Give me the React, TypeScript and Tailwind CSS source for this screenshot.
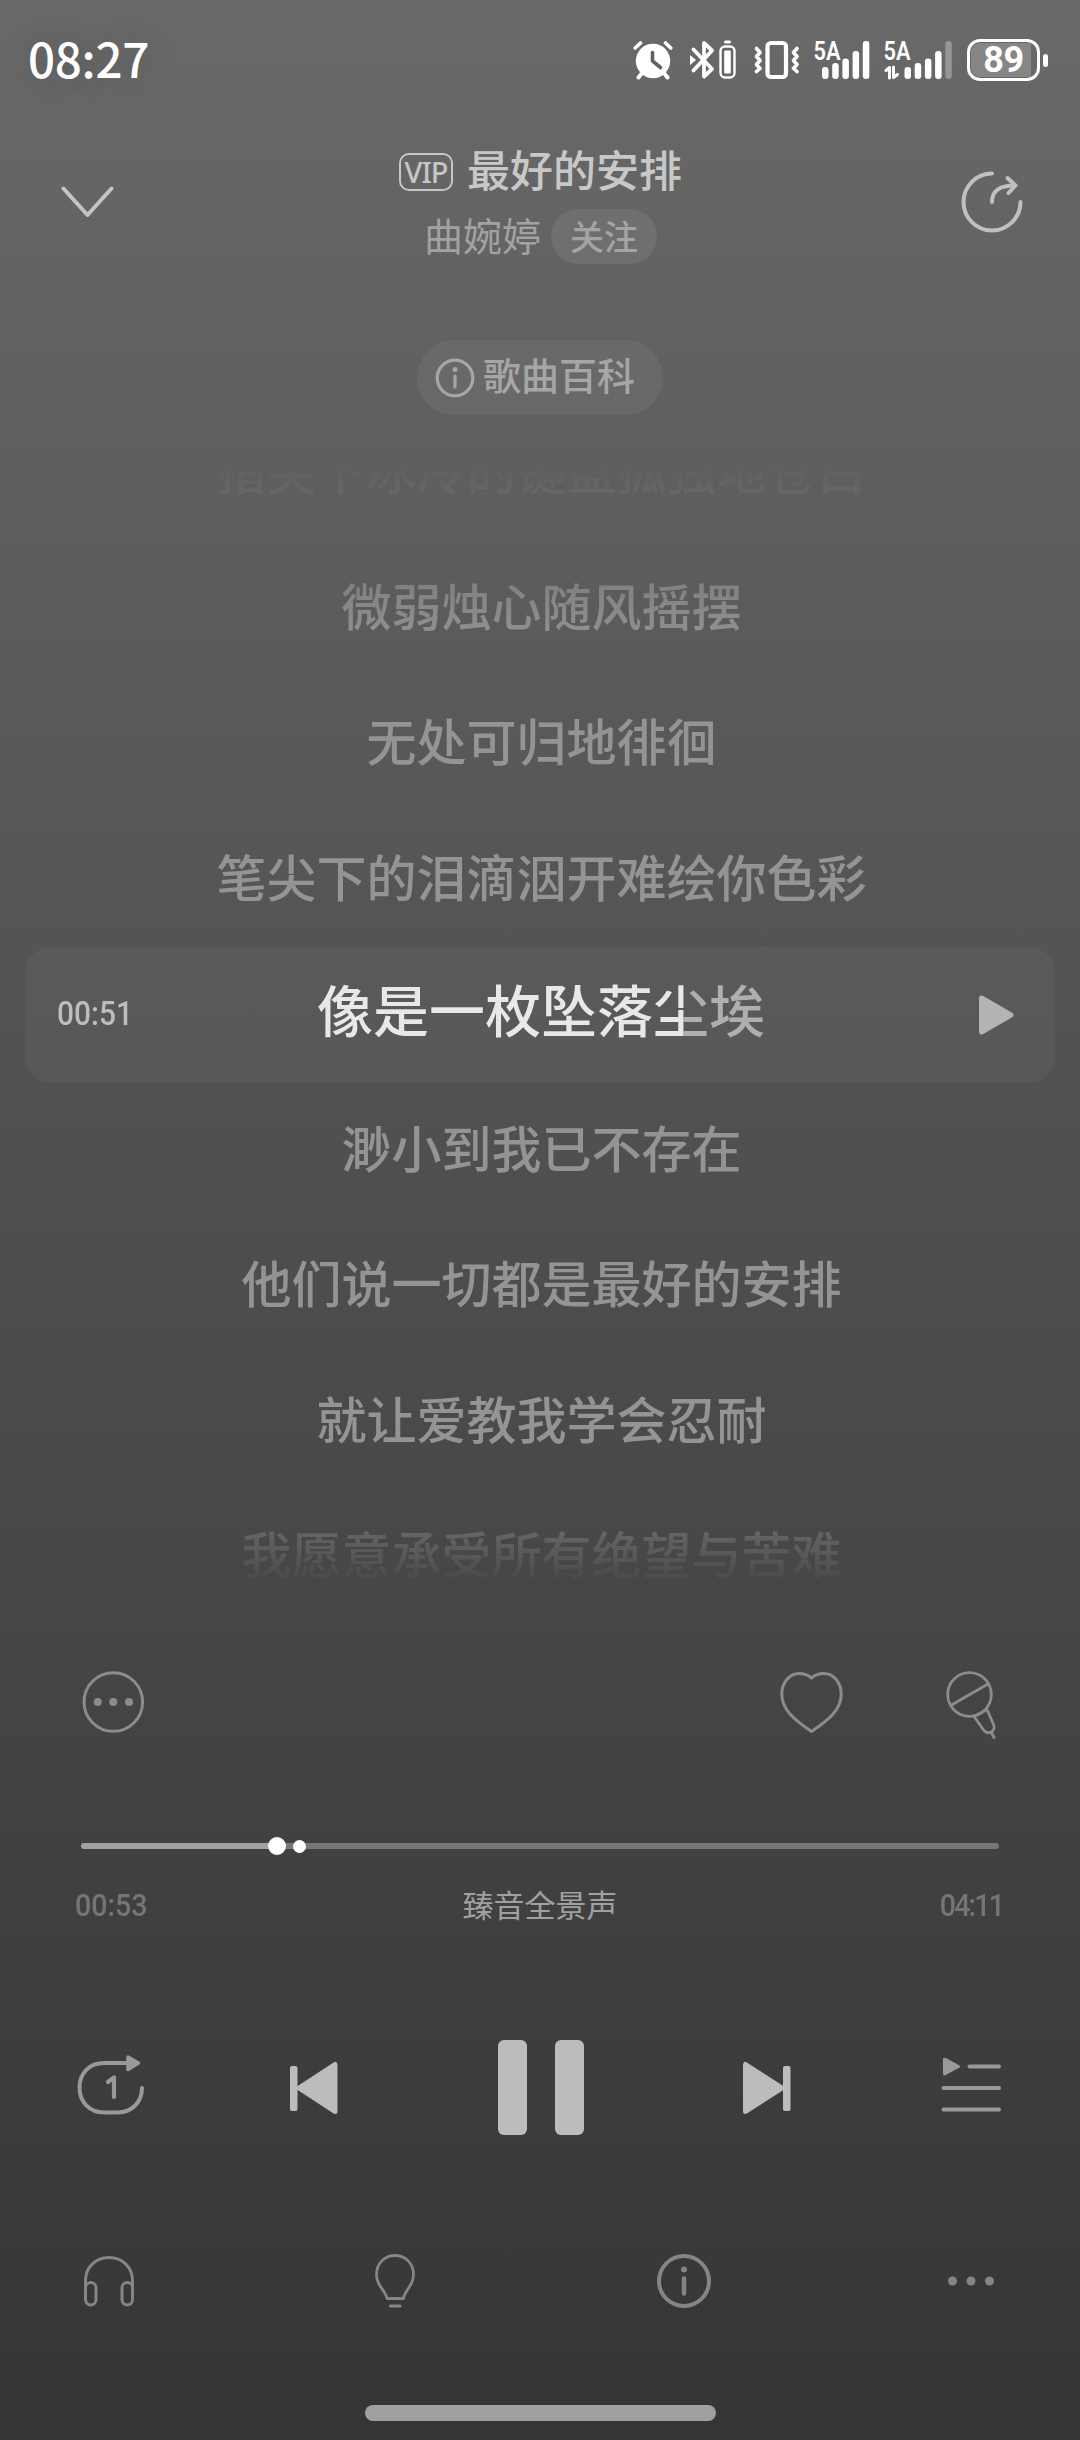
import React from 'react';

const lyrics = [
  '指尖下冰冷的键盘孤独地苍白',
  '微弱烛心随风摇摆',
  '无处可归地徘徊',
  '笔尖下的泪滴洇开难绘你色彩',
  '像是一枚坠落尘埃',
  '渺小到我已不存在',
  '他们说一切都是最好的安排',
  '就让爱教我学会忍耐',
  '我愿意承受所有绝望与苦难',
];

const CURRENT = 4;

const AlarmIcon = () => (
  <svg width="40" height="40" viewBox="0 0 40 40" fill="none" stroke="#fff" strokeLinecap="round">
    <circle cx="20" cy="21" r="17.2" fill="#fff" stroke="none" />
    <path d="M2.2 8 7.5 3M37.8 8 32.500 3" strokeWidth="3.600" />
    <path d="M9 33l-3.500 4.500M31 33l3.500 4.500" strokeWidth="4" />
    <path d="M19.500 12.500V21l8 6.500" stroke="#616161" strokeWidth="3.600" />
  </svg>
);

const BluetoothIcon = () => (
  <svg width="47" height="40" viewBox="0 0 47 40" fill="none" stroke="#fff">
    <path d="M3.500 9.500 22 29l-8 7.500V3L22 10.500 3.500 30.500" strokeWidth="3.800" strokeLinecap="round" strokeLinejoin="round" />
    <path d="M0 15l6 5-6 5z" fill="#fff" stroke="none" />
    <rect x="34" y="0.500" width="7" height="3" rx="1.500" fill="#fff" stroke="none" />
    <rect x="30.500" y="6.500" width="14" height="31" rx="4.500" strokeWidth="2.400" />
    <rect x="34.200" y="10.500" width="6.600" height="23" rx="1" fill="#fff" stroke="none" />
  </svg>
);

const VibrateIcon = () => (
  <svg width="46" height="40" viewBox="0 0 46 40" fill="none" stroke="#fff" strokeLinecap="round" strokeLinejoin="round">
    <rect x="13.500" y="3" width="18.500" height="34" rx="3.500" strokeWidth="4.200" />
    <path d="M2.500 8.500l3.500 4-3.500 4 3.500 4-3.500 4 3.500 4-3.500 3M43 8.500l-3.500 4 3.500 4-3.500 4 3.500 4-3.500 4 3.500 3" strokeWidth="3.600" />
  </svg>
);

const SignalIcon = ({ data = false }: { data?: boolean }) => (
  <svg className="overflow-visible" width={data ? 68 : 56} height="40" viewBox={data ? '0 0 68 40' : '0 0 56 40'} fill="#fff">
    <text x="-0.500" y="19.500" fontSize="26" fontWeight="600" fontFamily="Roboto, sans-serif" textLength="27" lengthAdjust="spacingAndGlyphs">
      5A
    </text>
    {data && (
      <path d="M2 30.500 5.500 27.500V38M9.500 27v10.500l4-3" fill="none" stroke="#fff" strokeWidth="3" strokeLinecap="round" strokeLinejoin="round" />
    )}
    <g transform={data ? 'translate(12.500 0)' : undefined}>
      <rect x="8" y="27" width="6.500" height="12" rx="3" />
      <rect x="18.200" y="23" width="6.500" height="16" rx="3" />
      <rect x="28.400" y="18.500" width="6.500" height="20.500" rx="3" />
      <rect x="38.600" y="11" width="6.500" height="28" rx="3" />
      <rect x="48.800" y="1" width="6.500" height="38" rx="3" fillOpacity={data ? 0.3 : 1} />
    </g>
  </svg>
);

const StatusBar = () => (
  <div className="flex h-[120px] items-center pl-7 pr-8 text-white">
    <span className="-mt-[5px] text-[47.500px] font-medium leading-[60px] tracking-[-0.300px] [text-shadow:0_0_40px_rgba(0,0,0,0.2)]">08:27</span>
    <div className="ml-auto flex items-center">
      <AlarmIcon />
      <div className="ml-[17px]"><BluetoothIcon /></div>
      <div className="ml-[17px]"><VibrateIcon /></div>
      <div className="ml-[14px]"><SignalIcon /></div>
      <div className="ml-[14px]"><SignalIcon data /></div>
      <div className="ml-[15px] flex items-center gap-[3px]">
        <div className="flex h-[42px] w-[73px] rounded-[13px] border-[3px] border-white p-px">
          <div className="flex h-full w-[60px] items-center justify-center rounded-l-[9px] bg-white/20 pl-[5px] font-['Roboto',sans-serif] text-[36px] font-bold leading-[36px] tracking-[-0.500px]">
            89
          </div>
        </div>
        <div className="h-[13px] w-[5px] rounded-full bg-white" />
      </div>
    </div>
  </div>
);

const Header = () => (
  <div className="flex h-[160px] justify-between pl-[61px] pr-[57px]">
    <svg className="mt-[66px]" width="54" height="32" viewBox="0 0 54 32" fill="none" stroke="#c4c4c4" strokeWidth="4" strokeLinecap="round" strokeLinejoin="round">
      <path d="M2.500 2.500 26.500 29 50.500 2.500" />
    </svg>
    <div className="flex flex-col items-center pl-[5px]">
      <div className="mt-5 flex h-[60px] items-center">
        <span className="mt-1 flex h-[38px] w-[54px] items-center justify-center rounded-[10px] border-2 border-[#c6c6c6] pb-px font-['Noto_Sans',sans-serif] text-[29px] font-medium leading-none tracking-[-1px] text-[#c6c6c6]">
          VIP
        </span>
        <h1 className="-mt-1 ml-[14px] text-[43px] font-medium leading-[56px] text-[#c8c8c8]">最好的安排</h1>
      </div>
      <div className="mt-[9px] flex items-center">
        <span className="-mt-[6px] text-[39px] leading-[54px] text-[#a2a2a2]">曲婉婷</span>
        <span className="ml-[10px] flex h-[55px] w-[106px] items-center justify-center rounded-full bg-white/[0.07] pb-[2px] text-[34px] font-medium leading-[46px] text-[#a4a4a4]">
          关注
        </span>
      </div>
    </div>
    <svg className="mt-[50px]" width="62" height="64" viewBox="0 0 62 64" fill="none" stroke="#c0c0c0" strokeWidth="4" strokeLinecap="round" strokeLinejoin="round">
      <path d="M31 3.500A28.500 28.500 0 1 0 59.500 32" />
      <path d="M31 32C31 21 38 15.500 54 15.500M46.500 8 54.500 15.500 47.500 23" />
    </svg>
  </div>
);

const Lyrics = () => (
  <div className="relative mt-10 h-[1135px] overflow-hidden">
    <div className="absolute left-[25px] top-[492px] h-[136px] w-[1030px] rounded-[26px] bg-white/[0.04]" />
    <div className="relative flow-root h-full [mask-image:linear-gradient(to_bottom,transparent_8px,black_190px,black_990px,transparent_1132px)]">
      <div className="-mt-[54px] flex flex-col pl-[3px] text-center text-[50px] font-medium text-[#949494]">
        {lyrics.map((line, i) => (
          <div key={line} className="flex h-[135.500px] shrink-0 items-center justify-center">
            {i === CURRENT ? (
              <span className="-mt-[6px] mr-px bg-[linear-gradient(to_right,#e8e8e8_81.6%,#afafaf_81.6%)] bg-clip-text text-[56px] leading-[80px] text-transparent">
                {line}
              </span>
            ) : (
              <span>{line}</span>
            )}
          </div>
        ))}
      </div>
    </div>
    <div className="absolute left-[57px] right-[65px] top-[540px] flex h-10 items-center justify-between">
      <span className="-mt-1 origin-left scale-x-[0.88] font-['Roboto',sans-serif] text-[34px] font-medium leading-[40px] text-[#bdbdbd]">00:51</span>
      <svg width="37" height="42" viewBox="0 0 37 42" fill="#b4b4b4" stroke="#b4b4b4" strokeWidth="5" strokeLinejoin="round">
        <path d="M3.500 4 33 21 3.500 38z" />
      </svg>
    </div>
  </div>
);

const ActionRow = () => (
  <div className="mt-[81px] flex h-[68px] items-start pl-[82px] pr-[83px] text-[#8c8c8c]">
    <svg width="63" height="63" viewBox="0 0 63 63" fill="none" stroke="currentColor" strokeWidth="3">
      <circle cx="31.300" cy="31" r="29.300" />
      <g fill="currentColor" stroke="none">
        <circle cx="15.700" cy="31" r="4" />
        <circle cx="31.300" cy="31" r="4" />
        <circle cx="47" cy="31" r="4" />
      </g>
    </svg>
    <svg className="ml-auto" width="64" height="64" viewBox="0 0 64 64" fill="none" stroke="currentColor" strokeWidth="3" strokeLinejoin="round">
      <path d="M31.500 7C27.500 3.500 23.500 2.500 19.500 2.500 9.500 2.500 1.800 11.500 1.800 23c0 15.500 12 25.500 29.700 37.500C49.500 48.500 61.200 38.500 61.200 23c0-11.500-7.700-20.500-17.700-20.500C39.500 2.500 35.500 3.500 31.500 7z" />
    </svg>
    <svg className="ml-[102px]" width="51" height="68" viewBox="0 0 51 68" fill="none" stroke="currentColor" strokeWidth="2.800" strokeLinecap="round" strokeLinejoin="round">
      <circle cx="23.500" cy="23.500" r="21.800" />
      <path d="M5.500 34 42 13" />
      <path d="M28 45.500 38 59.500c4 4.500 11 1.500 10-5L41 38.500 28 45.500" />
      <path d="M45.500 62l2.500 4.500" />
    </svg>
  </div>
);

const Progress = () => (
  <div className="mt-[98px] px-[77px]">
    <div className="relative mx-1 h-[18px]">
      <div className="absolute top-[6px] h-[6px] w-full rounded-full bg-[#777777]" />
      <div className="absolute top-[6px] h-[6px] w-[196px] rounded-l-full bg-[#a2a2a2]" />
      <div className="absolute left-[187px] size-[18px] rounded-full bg-white" />
      <div className="absolute left-[212px] top-[2.500px] size-[13px] rounded-full bg-white" />
    </div>
    <div className="mt-[29px] flex h-10 items-center justify-between text-[#757575]">
      <span className="-ml-[2px] mt-[2px] w-[92px] origin-left scale-x-[0.92] font-['Roboto',sans-serif] text-[31px] font-medium leading-none">00:53</span>
      <span className="text-[31px] leading-[40px] text-[#a0a0a0]">臻音全景声</span>
      <span className="mt-[2px] w-[90px] origin-right scale-x-[0.92] text-right font-['Roboto',sans-serif] text-[31px] font-medium leading-none tracking-[-2px]">04:11</span>
    </div>
  </div>
);

const Controls = () => (
  <div className="mt-[116px] flex h-[95px] items-center pl-[76px] text-[#bcbcbc]">
    <svg className="-mt-[6px]" width="70" height="68" viewBox="0 0 70 68" fill="none" stroke="#999" strokeWidth="4" strokeLinecap="round" strokeLinejoin="round">
      <path d="M50 12H28C13.500 12 3.500 22 3.500 36.500S13.500 61.500 28 61.500H41.500C56 61.500 66 51 66 37" />
      <path d="M52 6 62.500 12 52 18.500z" fill="#999" strokeWidth="3.500" />
      <path d="M32 31 38 26.500V46" strokeWidth="4.200" />
    </svg>
    <svg className="ml-[144px]" width="48" height="54" viewBox="0 0 48 54" fill="currentColor">
      <rect x="0" y="5" width="7.500" height="45" rx="2" />
      <path d="M9 27 45 3.500V50.500z" stroke="currentColor" strokeWidth="5" strokeLinejoin="round" />
    </svg>
    <div className="ml-[160px] flex h-[95px] w-[86px] justify-between">
      <div className="h-full w-[29px] rounded-[6px] bg-current" />
      <div className="h-full w-[29px] rounded-[6px] bg-current" />
    </div>
    <svg className="ml-[159px]" width="48" height="54" viewBox="0 0 48 54" fill="currentColor">
      <rect x="40" y="5" width="7.500" height="45" rx="2" />
      <path d="M39 27 2.500 3.500V50.500z" stroke="currentColor" strokeWidth="5" strokeLinejoin="round" />
    </svg>
    <svg className="ml-[149px]" width="62" height="60" viewBox="0 0 62 60" fill="none" stroke="#999" strokeWidth="4" strokeLinecap="round" strokeLinejoin="round">
      <path d="M29.500 8.500H59M3.500 30H59M3.500 51.500H59" />
      <path d="M4.500 1 18.500 8.500 4.500 16z" fill="#999" strokeWidth="3" />
    </svg>
  </div>
);

const BottomBar = () => (
  <div className="mt-[118px] flex h-14 items-center justify-between px-[81px] text-[#858585]">
    <svg width="56" height="56" viewBox="0 0 56 56" fill="none" stroke="currentColor" strokeWidth="3">
      <path d="M4.500 45V27.500C4.500 14.500 14.500 4.500 28 4.500S51.500 14.500 51.500 27.500V45" />
      <rect x="4.500" y="29.500" width="10.500" height="22.500" rx="5.250" />
      <rect x="41" y="29.500" width="10.500" height="22.500" rx="5.250" />
    </svg>
    <svg width="56" height="56" viewBox="0 0 56 56" fill="none" stroke="currentColor" strokeWidth="2.800" strokeLinecap="round" strokeLinejoin="round">
      <path d="M19 45.500C17 36 8.500 33.500 8.500 21.500 8.500 10.500 16.500 2.500 27 2.500S45.500 10.500 45.500 21.500C45.500 33.500 37 36 35.500 45.500z" />
      <path d="M22.500 53H32" strokeWidth="3.200" />
    </svg>
    <svg width="56" height="56" viewBox="0 0 56 56" fill="none" stroke="currentColor" strokeWidth="4" strokeLinecap="round">
      <circle cx="28" cy="28" r="25" />
      <path d="M28 25.500v15" strokeWidth="4.500" />
      <circle cx="28" cy="16.500" r="3" fill="currentColor" stroke="none" />
    </svg>
    <svg width="56" height="56" viewBox="0 0 56 56" fill="currentColor">
      <circle cx="9.500" cy="28" r="4.500" />
      <circle cx="28" cy="28" r="4.500" />
      <circle cx="46.500" cy="28" r="4.500" />
    </svg>
  </div>
);

const App = () => {
  return (
    <div
      lang="zh-CN"
      className="flex h-[2440px] w-[1080px] flex-col overflow-hidden bg-linear-to-b from-[#696969] to-[#353535] font-['Noto_Sans_CJK_SC',sans-serif]"
    >
      <StatusBar />
      <Header />
      <div className="mt-[60px] flex h-[75px] w-[246px] items-center self-center rounded-full bg-white/[0.055] pl-[18px] text-[#a6a6a6]">
        <svg width="40" height="40" viewBox="0 0 40 40" fill="none" stroke="currentColor" strokeWidth="3.200" strokeLinecap="round">
          <circle cx="20" cy="20" r="17.800" />
          <path d="M20 18v11" />
          <circle cx="20" cy="11.500" r="2.500" fill="currentColor" stroke="none" />
        </svg>
        <span className="-mt-[7px] ml-2 text-[38px] font-medium leading-[50px]">歌曲百科</span>
      </div>
      <Lyrics />
      <ActionRow />
      <Progress />
      <Controls />
      <BottomBar />
      <div className="mt-24 h-4 w-[351px] self-center rounded-full bg-[#a0a0a0]" />
    </div>
  );
};

export default App;
